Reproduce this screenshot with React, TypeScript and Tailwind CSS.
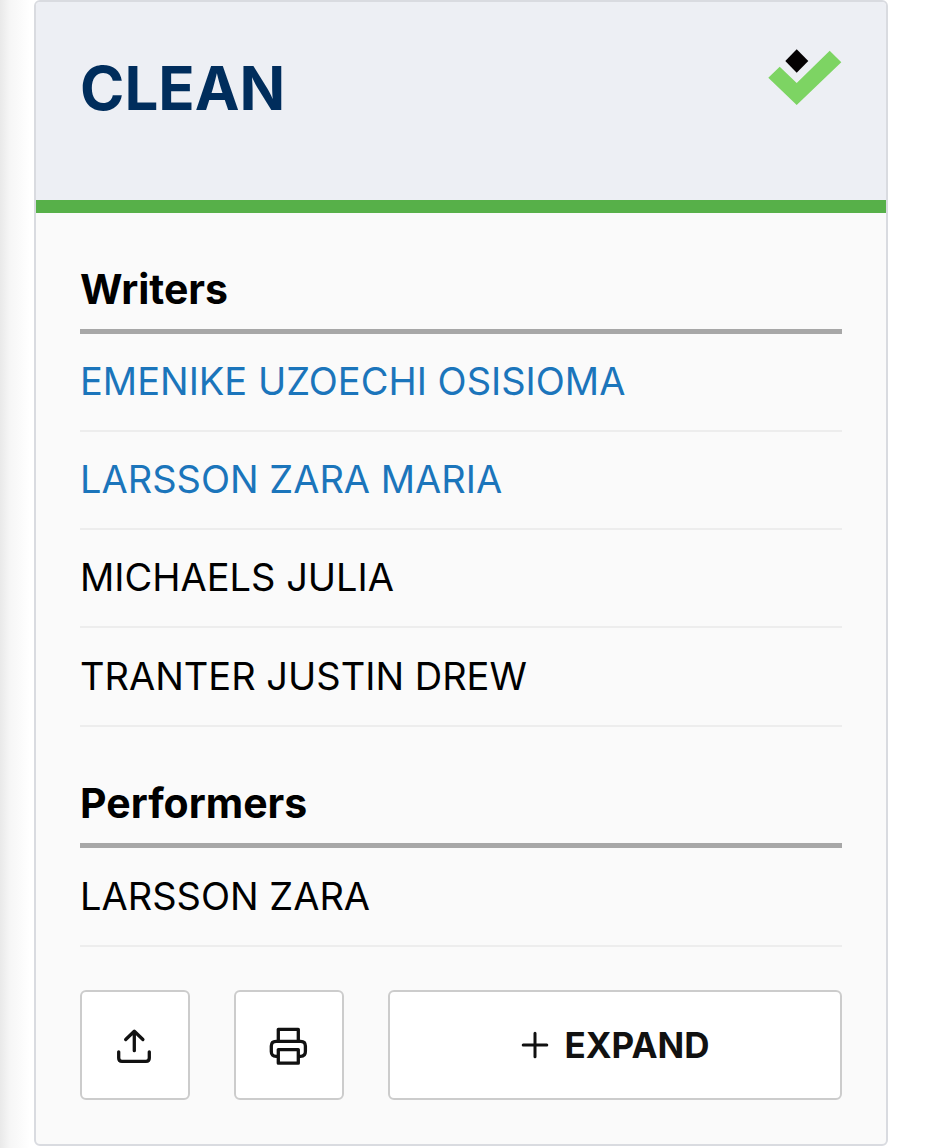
const writers = [
  { name: "EMENIKE UZOECHI OSISIOMA", href: "#emenike" },
  { name: "LARSSON ZARA MARIA", href: "#larsson" },
  { name: "MICHAELS JULIA" },
  { name: "TRANTER JUSTIN DREW" },
];

const performers = [{ name: "LARSSON ZARA" }];

type Person = { name: string; href?: string };

function VerifiedMark() {
  return (
    <svg viewBox="0 0 74 58" className="w-[74px] h-[58px] shrink-0" role="img" aria-label="Verified">
      <path d="M.3 29.7 11.7 18.7 28.7 35 61.7 2.7 73.3 14.3 28.7 57z" fill="#7dd463" />
      <path d="M28.7 1.3 40.3 13 28.7 24.7 17.3 13z" fill="#050203" />
    </svg>
  );
}

function ShareIcon() {
  return (
    <svg viewBox="0 0 40 40" className="size-10" fill="none" stroke="currentColor" strokeWidth="3.3" strokeLinecap="round" strokeLinejoin="round">
      <path d="M3.7 26.8V33q0 3.3 3.3 3.3h24q3.3 0 3.3-3.3v-6.2" />
      <path d="M19.3 25.7V6.5M10.7 14.5l8.6-8.3 8.6 8.3" />
    </svg>
  );
}

function PrintIcon() {
  return (
    <svg viewBox="0 0 40 40" className="size-10" fill="none" stroke="currentColor" strokeWidth="3.3">
      <path d="M9.3 16.3V4.3h20v12" strokeLinejoin="round" />
      <path d="M9.3 31.4H7.1q-4.8 0-4.8-4.8v-5.5q0-4.8 4.8-4.8h24.5q4.8 0 4.8 4.8v5.5q0 4.8-4.8 4.8h-2.3" />
      <path d="M9.3 24.6h20v13.6h-20z" strokeLinejoin="round" />
    </svg>
  );
}

function PlusIcon() {
  return (
    <svg viewBox="0 0 28 28" className="size-7" fill="none" stroke="currentColor" strokeWidth="3" strokeLinecap="round">
      <path d="M14 2.2v23.6M2.2 14h23.6" />
    </svg>
  );
}

function People({ title, people }: { title: string; people: Person[] }) {
  return (
    <section>
      <h2 className="h-[121px] pt-[50px] border-b-[5px] border-[#a7a7a7] text-[41px] leading-[52px] font-bold text-black">{title}</h2>
      <ul>
        {people.map(p => (
          <li key={p.name} className="h-[98px] last:h-[99px] pb-0.5 flex items-center border-b-2 border-[#ededed] text-[38px] leading-[48px] text-black">
            {p.href ? <a href={p.href} className="text-[#1b75bb]">{p.name}</a> : p.name}
          </li>
        ))}
      </ul>
    </section>
  );
}

const button = "h-[110px] rounded-md border-2 border-[#cccccc] bg-white text-[#111111] flex items-center justify-center";

export default function App() {
  return (
    <div className="min-h-screen bg-white font-['Inter',sans-serif] bg-[linear-gradient(to_right,#e9e9e9,#f6f6f6_10px,#ffffff_30px)]">
      <main className="pl-[34px] pr-11 pb-0.5">
        <article className="rounded-md border-2 border-[#d9dbe0] bg-[#fafafa] overflow-hidden">
          <header className="h-[211px] px-11 pt-[46px] flex items-start justify-between border-b-[13px] border-[#57b049] bg-[#edeff4]">
            <h1 className="pt-1 text-[60px] leading-[72px] font-bold text-[#002d5c]">CLEAN</h1>
            <VerifiedMark />
          </header>
          <div className="px-11 pb-11">
            <People title="Writers" people={writers} />
            <People title="Performers" people={performers} />
            <div className="mt-[43px] flex gap-11">
              <button type="button" aria-label="Share" className={`${button} w-[110px]`}>
                <ShareIcon />
              </button>
              <button type="button" aria-label="Print" className={`${button} w-[110px]`}>
                <PrintIcon />
              </button>
              <button type="button" className={`${button} flex-1 gap-4 text-[35px] leading-[44px] font-bold`}>
                <PlusIcon />
                EXPAND
              </button>
            </div>
          </div>
        </article>
      </main>
    </div>
  );
}
